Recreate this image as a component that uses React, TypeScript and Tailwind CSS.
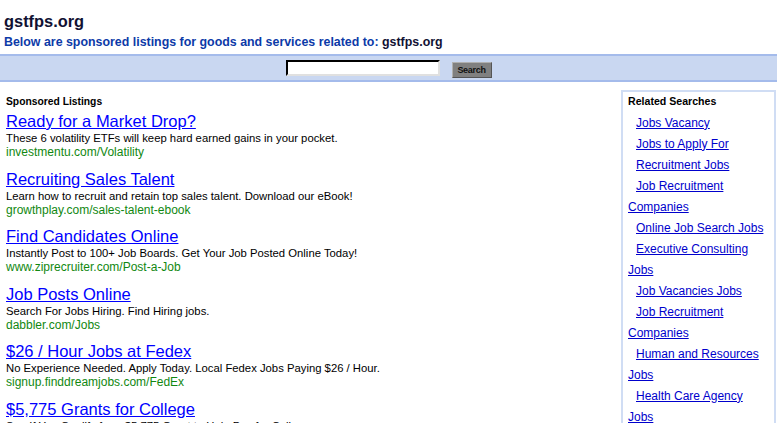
import React from 'react';

const listings = [
  {
    title: 'Ready for a Market Drop?',
    desc: 'These 6 volatility ETFs will keep hard earned gains in your pocket.',
    url: 'investmentu.com/Volatility',
  },
  {
    title: 'Recruiting Sales Talent',
    desc: 'Learn how to recruit and retain top sales talent. Download our eBook!',
    url: 'growthplay.com/sales-talent-ebook',
  },
  {
    title: 'Find Candidates Online',
    desc: 'Instantly Post to 100+ Job Boards. Get Your Job Posted Online Today!',
    url: 'www.ziprecruiter.com/Post-a-Job',
  },
  {
    title: 'Job Posts Online',
    desc: 'Search For Jobs Hiring. Find Hiring jobs.',
    url: 'dabbler.com/Jobs',
  },
  {
    title: '$26 / Hour Jobs at Fedex',
    desc: 'No Experience Needed. Apply Today. Local Fedex Jobs Paying $26 / Hour.',
    url: 'signup.finddreamjobs.com/FedEx',
  },
  {
    title: '$5,775 Grants for College',
    desc: 'See If You Qualify for a $5,775 Grant to Help Pay for College.',
    url: 'grants.collegesearch.com/Grants',
  },
];

const related = [
  'Jobs Vacancy',
  'Jobs to Apply For',
  'Recruitment Jobs',
  'Job Recruitment Companies',
  'Online Job Search Jobs',
  'Executive Consulting Jobs',
  'Job Vacancies Jobs',
  'Job Recruitment Companies',
  'Human and Resources Jobs',
  'Health Care Agency Jobs',
  'Job Search Jobs',
];

export default function App() {
  return (
    <div className="w-[777px] h-[423px] overflow-hidden bg-white font-['Liberation_Sans',Arial,sans-serif]">
      {/* Header */}
      <div className="pt-[11px] pl-[4px]">
        <h1 className="text-[16.4px] leading-[20px] font-bold text-[#111133]">gstfps.org</h1>
        <p className="text-[12.4px] leading-[16px] font-bold text-[#0c3aa8] mt-[3px]">
          Below are sponsored listings for goods and services related to:{' '}
          <span className="text-[#111133]">gstfps.org</span>
        </p>
      </div>

      {/* Search band */}
      <div className="mt-[4px] h-[28px] bg-[#c9d7f1] border-y-2 border-[#a4bbeb] flex items-center justify-center gap-[12px]">
        <input
          type="text"
          className="w-[154px] h-[16px] bg-white border-2 border-t-black border-l-black border-b-[#e0e0e0] border-r-[#e0e0e0] outline-none"
        />
        <button className="mt-[4px] w-[40px] h-[16px] bg-[#808080] border border-t-[#b0b0b0] border-l-[#b0b0b0] border-b-[#555] border-r-[#555] text-[9px] font-bold text-[#111] leading-none tracking-[-0.3px]">
          Search
        </button>
      </div>

      {/* Body */}
      <div className="flex mt-[8px]">
        <div className="flex-1 pl-[6px] pt-[5px]">
          <h2 className="text-[10.3px] leading-[13px] font-bold text-black mb-[4px]">Sponsored Listings</h2>
          {listings.map((l, i) => (
            <div key={i} className="mb-[10.5px]">
              <a href="#" className="block text-[16.5px] leading-[19px] text-[#0000ff] underline">
                {l.title}
              </a>
              <div className="text-[11.3px] leading-[14px] text-black">{l.desc}</div>
              <div className="text-[12px] leading-[14px] text-[#118811]">{l.url}</div>
            </div>
          ))}
        </div>

        <div className="w-[155px] mr-[1px] border-2 border-[#d0ddf4] pl-[5px] pr-[4px] pt-[3px]">
          <h3 className="text-[10.6px] leading-[13px] font-bold text-black mb-[4.5px]">Related Searches</h3>
          {related.map((r, i) => (
            <div key={i} className="indent-[8px] text-[12px] leading-[21px]">
              <a href="#" className="text-[#0000cc] underline">
                {r}
              </a>
            </div>
          ))}
        </div>
      </div>
    </div>
  );
}
